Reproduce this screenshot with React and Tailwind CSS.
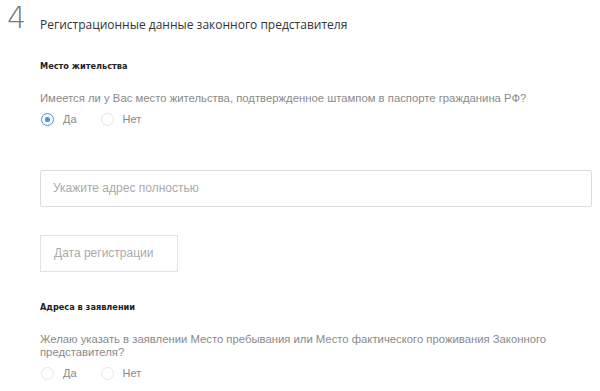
const sans = { fontFamily: '"Liberation Sans", Arial, sans-serif' }
const heading = { fontFamily: '"DejaVu Sans", sans-serif' }

function Radio({ label, checked }) {
  return (
    <label className="flex items-center gap-[9px] text-[11px] text-[#888]">
      <span
        className={
          'w-[13px] h-[13px] rounded-full border flex items-center justify-center bg-white ' +
          (checked ? 'border-[#4a90d9]' : 'border-[#e6e6e6]')
        }
      >
        {checked && <span className="w-[5px] h-[5px] rounded-full bg-[#4a90d9]" />}
      </span>
      {label}
    </label>
  )
}

function RadioGroup({ value, className }) {
  return (
    <div className={'flex items-center gap-[24px] pl-[1px] ' + className}>
      <Radio label="Да" checked={value === 'yes'} />
      <Radio label="Нет" checked={value === 'no'} />
    </div>
  )
}

export default function App() {
  return (
    <div className="w-[600px] h-[391px] bg-white overflow-hidden" style={sans}>
      <div className="flex items-start">
        <div className="w-[40px] pl-[7px] pt-[3px] text-[30px] leading-[30px] text-[#777]" style={{ ...heading, fontWeight: 200 }}>
          4
        </div>
        <h1 className="pt-[16px] text-[12px] text-[#333]" style={{ fontFamily: '"Open Sans", sans-serif' }}>
          Регистрационные данные законного представителя
        </h1>
      </div>

      <div className="pl-[40px] pr-[8px]">
        <h2 className="mt-[26px] text-[8.2px] font-bold text-[#222]" style={heading}>
          Место жительства
        </h2>
        <p className="mt-[18px] text-[11.3px] text-[#8a8a8a]">
          Имеется ли у Вас место жительства, подтвержденное штампом в паспорте гражданина РФ?
        </p>
        <RadioGroup value="yes" className="mt-[4px]" />

        <div className="mt-[42px] h-[37px] border border-[#dcdcdc] rounded-[2px] flex items-center px-[12px] text-[12px] text-[#aaa]">
          Укажите адрес полностью
        </div>

        <div className="mt-[28px] w-[138px] h-[37px] border border-[#e2e2e2] flex items-center px-[13px] text-[12px] text-[#aaa]">
          Дата регистрации
        </div>

        <h2 className="mt-[29px] text-[8.2px] font-bold text-[#222]" style={heading}>
          Адреса в заявлении
        </h2>
        <p className="mt-[20px] w-[520px] text-[11.3px] leading-[13px] text-[#8a8a8a]">
          Желаю указать в заявлении Место пребывания или Место фактического проживания Законного представителя?
        </p>
        <RadioGroup value="" className="mt-[6px]" />
      </div>
    </div>
  )
}
